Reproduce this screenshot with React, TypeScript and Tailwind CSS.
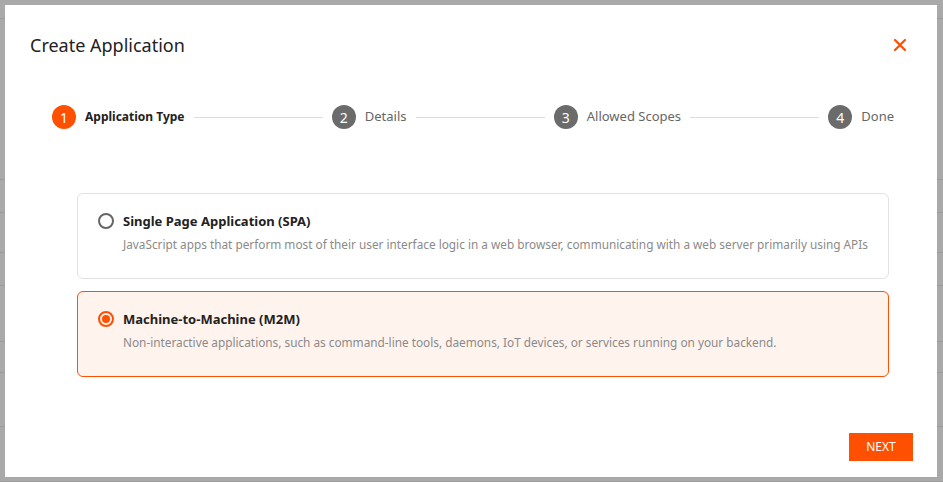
import { Fragment, useState } from "react";

const steps = ["Application Type", "Details", "Allowed Scopes", "Done"];

const options = [
  {
    id: "spa",
    title: "Single Page Application (SPA)",
    desc: "JavaScript apps that perform most of their user interface logic in a web browser, communicating with a web server primarily using APIs",
  },
  {
    id: "m2m",
    title: "Machine-to-Machine (M2M)",
    desc: "Non-interactive applications, such as command-line tools, daemons, IoT devices, or services running on your backend.",
  },
];

// rows of the page behind the modal, only their edges show
const bgRows = [19, 161, 33, 40, 33, 56, 31, 54, 55];

export default function App() {
  const [selected, setSelected] = useState("m2m");
  const current = 0;

  return (
    <div className="relative h-[482px] w-[943px] overflow-hidden bg-[#a9a9a9]" style={{ fontFamily: "'Noto Sans', sans-serif" }}>
      {/* page behind */}
      <div className="flex flex-col">
        {bgRows.map((h, i) => (
          <div key={i} className="shrink-0 border-b border-[#9b9b9b]" style={{ height: h }} />
        ))}
      </div>

      {/* modal */}
      <div className="absolute left-[5px] top-[5px] flex h-[472px] w-[932px] flex-col bg-white">
        <div className="flex items-center justify-between pl-[25px] pr-[30px] pt-[27px]">
          <h2 className="text-[18px] leading-[26px] text-[#222]">Create Application</h2>
          <button className="text-[#ff4f00]">
            <svg width="14" height="14" viewBox="0 0 14 14" fill="none" stroke="currentColor" strokeWidth="2.2" strokeLinecap="round">
              <path d="M2 2L12 12M12 2L2 12" />
            </svg>
          </button>
        </div>

        {/* stepper */}
        <div className="mt-[47px] flex items-center pl-[47px] pr-[43px]">
          {steps.map((s, i) => (
            <Fragment key={s}>
              <span
                className={`flex h-[24px] w-[24px] shrink-0 items-center justify-center rounded-full text-[14px] text-white ${
                  i === current ? "bg-[#ff4f00]" : "bg-[#6b6b6b]"
                }`}
              >
                {i + 1}
              </span>
              <span
                className={`ml-[9px] whitespace-nowrap ${
                  i === current ? "text-[12px] font-bold text-[#222]" : "text-[13px] text-[#666]"
                }`}
              >
                {s}
              </span>
              {i < steps.length - 1 && <span className="mx-[9px] h-px flex-1 bg-[#dcdcdc]" />}
            </Fragment>
          ))}
        </div>

        {/* options */}
        <div className="mt-[64px] flex flex-col gap-[12px] pl-[72px] pr-[48px]">
          {options.map((o) => {
            const on = selected === o.id;
            return (
              <button
                key={o.id}
                onClick={() => setSelected(o.id)}
                className={`flex h-[86px] items-start gap-[9px] rounded-[6px] border pl-[20px] pt-[18px] text-left ${
                  on ? "border-[#ff4f00] bg-[#fff3ee]" : "border-[#e2e2e2] bg-white"
                }`}
              >
                <span
                  className={`mt-[1px] flex h-[16px] w-[16px] shrink-0 items-center justify-center rounded-full border-2 ${
                    on ? "border-[#ff4f00]" : "border-[#666]"
                  }`}
                >
                  {on && <span className="h-[8px] w-[8px] rounded-full bg-[#ff4f00]" />}
                </span>
                <span className="flex flex-col">
                  <span className="text-[13px] font-bold leading-[18px] text-[#222]">{o.title}</span>
                  <span className="mt-[6px] text-[11.8px] leading-[16px] text-[#8a8a8a]">{o.desc}</span>
                </span>
              </button>
            );
          })}
        </div>

        <div className="mt-auto flex justify-end pb-[16px] pr-[24px]">
          <button className="h-[28px] w-[64px] bg-[#ff4f00] text-[12px] text-white">NEXT</button>
        </div>
      </div>
    </div>
  );
}
